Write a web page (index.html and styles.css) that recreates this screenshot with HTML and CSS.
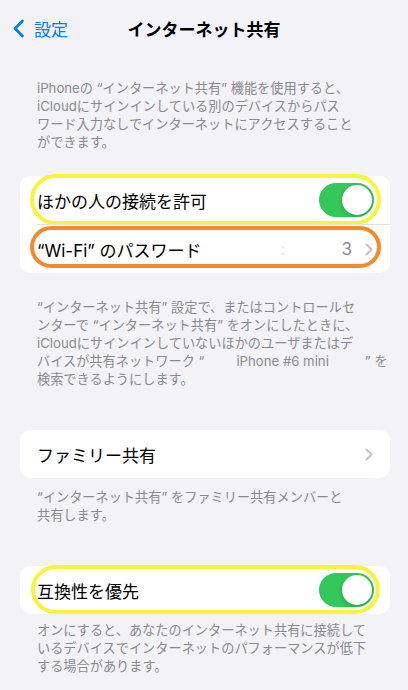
FILE: index.html
```html
<!DOCTYPE html>
<html lang="ja">
<head>
    <meta charset="UTF-8">
    <meta name="viewport" content="width=device-width, initial-scale=1.0">
    <title>インターネット共有</title>
    <link rel="stylesheet" href="styles.css">
</head>
<body>

<!-- ナビゲーション -->
<header class="nav">
    <a class="nav-back" href="#">
        <svg width="13" height="19" viewBox="0 0 13 19"><path d="M10.5 2 L3 9.5 L10.5 17" fill="none" stroke="#007aff" stroke-width="2.6" stroke-linecap="round" stroke-linejoin="round"/></svg>
        <span>設定</span>
    </a>
    <h1 class="nav-title">インターネット共有</h1>
    <div></div>
</header>

<p class="footer footer-top">iPhoneの “インターネット共有” 機能を使用すると、<br>iCloudにサインインしている別のデバイスからパス<br>ワード入力なしでインターネットにアクセスすること<br>ができます。</p>

<!-- 接続 -->
<div class="card card-first">
    <div class="cell">
        <div class="cell-body">
            <span class="cell-label">ほかの人の接続を許可</span>
            <span class="switch on"><span class="knob"></span></span>
        </div>
        <span class="ring ring-yellow"></span>
    </div>
    <div class="cell">
        <div class="cell-body">
            <span class="cell-label">“Wi-Fi” のパスワード</span>
            <span class="cell-value"><span class="redacted">:</span>3</span>
            <svg class="chevron" width="8" height="13" viewBox="0 0 8 13"><path d="M1.5 1.5 L6.5 6.5 L1.5 11.5" fill="none" stroke="#c4c4c7" stroke-width="2" stroke-linecap="round" stroke-linejoin="round"/></svg>
        </div>
        <span class="ring ring-orange"></span>
    </div>
</div>
<p class="footer footer-wifi">“インターネット共有” 設定で、またはコントロールセ<br>ンターで “インターネット共有” をオンにしたときに、<br>iCloudにサインインしていないほかのユーザまたはデ<br>バイスが共有ネットワーク “<span class="blank"></span>iPhone #6 mini<span class="blank blank-wide"></span>” を<br>検索できるようにします。</p>

<!-- ファミリー -->
<div class="card card-family">
    <div class="cell">
        <div class="cell-body">
            <span class="cell-label">ファミリー共有</span>
            <svg class="chevron" width="8" height="13" viewBox="0 0 8 13"><path d="M1.5 1.5 L6.5 6.5 L1.5 11.5" fill="none" stroke="#c4c4c7" stroke-width="2" stroke-linecap="round" stroke-linejoin="round"/></svg>
        </div>
    </div>
</div>
<p class="footer footer-family">“インターネット共有” をファミリー共有メンバーと<br>共有します。</p>

<!-- 互換性 -->
<div class="card card-compat">
    <div class="cell">
        <div class="cell-body">
            <span class="cell-label">互換性を優先</span>
            <span class="switch on"><span class="knob"></span></span>
        </div>
        <span class="ring ring-yellow ring-compat"></span>
    </div>
</div>
<p class="footer footer-compat">オンにすると、あなたのインターネット共有に接続して<br>いるデバイスでインターネットのパフォーマンスが低下<br>する場合があります。</p>

</body>
</html>
```

FILE: styles.css
```css
body {
    margin: 0;
    background-color: #f2f2f7;
    font-family: Inter, "Noto Sans CJK JP", sans-serif;
    color: #000;
}
.nav {
    display: grid;
    grid-template-columns: 1fr auto 1fr;
    align-items: center;
    height: 56px;
}
.nav-back {
    display: flex;
    align-items: center;
    gap: 9px;
    padding-left: 12px;
    color: #007aff;
    font-size: 17px;
    text-decoration: none;
}
.nav-title {
    margin: 0;
    font-size: 17px;
    font-weight: 700;
}
.footer {
    margin: 0;
    padding: 0 12px 0 37px;
    font-size: 13.2px;
    line-height: 18px;
    color: #8a8a8e;
}
.footer-top {
    margin-top: 23px;
}
.footer-wifi {
    margin-top: 25px;
}
.footer-family {
    margin-top: 10px;
}
.footer-compat {
    margin-top: 7px;
}
.blank {
    display: inline-block;
    width: 32px;
}
.blank-wide {
    width: 36px;
}
.card {
    margin: 0 18px 0 20px;
    background-color: #fff;
    border-radius: 10px;
}
.card-first {
    margin-top: 25px;
}
.card-family,
.card-compat {
    margin-top: 42px;
}
.cell {
    position: relative;
    padding-left: 17px;
}
.cell-body {
    display: flex;
    align-items: center;
    height: 48px;
    padding-right: 16px;
}
.cell + .cell .cell-body {
    border-top: 1px solid #e2e2e5;
}
.cell-label {
    font-size: 17px;
}
.cell-value {
    margin-left: auto;
    font-size: 17px;
    color: #8a8a8e;
}
.redacted {
    margin-right: 56px;
    color: #e4e4e6;
}
.chevron {
    margin-left: 13px;
    margin-right: 1px;
}
.cell-label + .chevron {
    margin-left: auto;
}
.switch {
    display: flex;
    justify-content: flex-end;
    margin-left: auto;
    width: 55px;
    height: 34px;
    padding: 2px;
    box-sizing: border-box;
    border-radius: 17px;
    background-color: #e9e9eb;
}
.switch.on {
    background-color: #34c759;
}
.knob {
    width: 30px;
    height: 30px;
    border-radius: 50%;
    background-color: #fff;
    box-shadow: 0 2px 5px rgba(0, 0, 0, 0.18);
}
/* marcas de anotación */
.ring {
    position: absolute;
    top: -2px;
    right: 9px;
    bottom: -1px;
    left: 10px;
    border: 4px solid #f8f43b;
    border-radius: 27px;
    pointer-events: none;
}
.ring-orange {
    top: 2px;
    bottom: 5px;
    border-color: #f6892b;
    border-radius: 24px;
}
.ring-compat {
    top: -1px;
    bottom: 0;
    left: 11px;
    right: 10px;
}
```
